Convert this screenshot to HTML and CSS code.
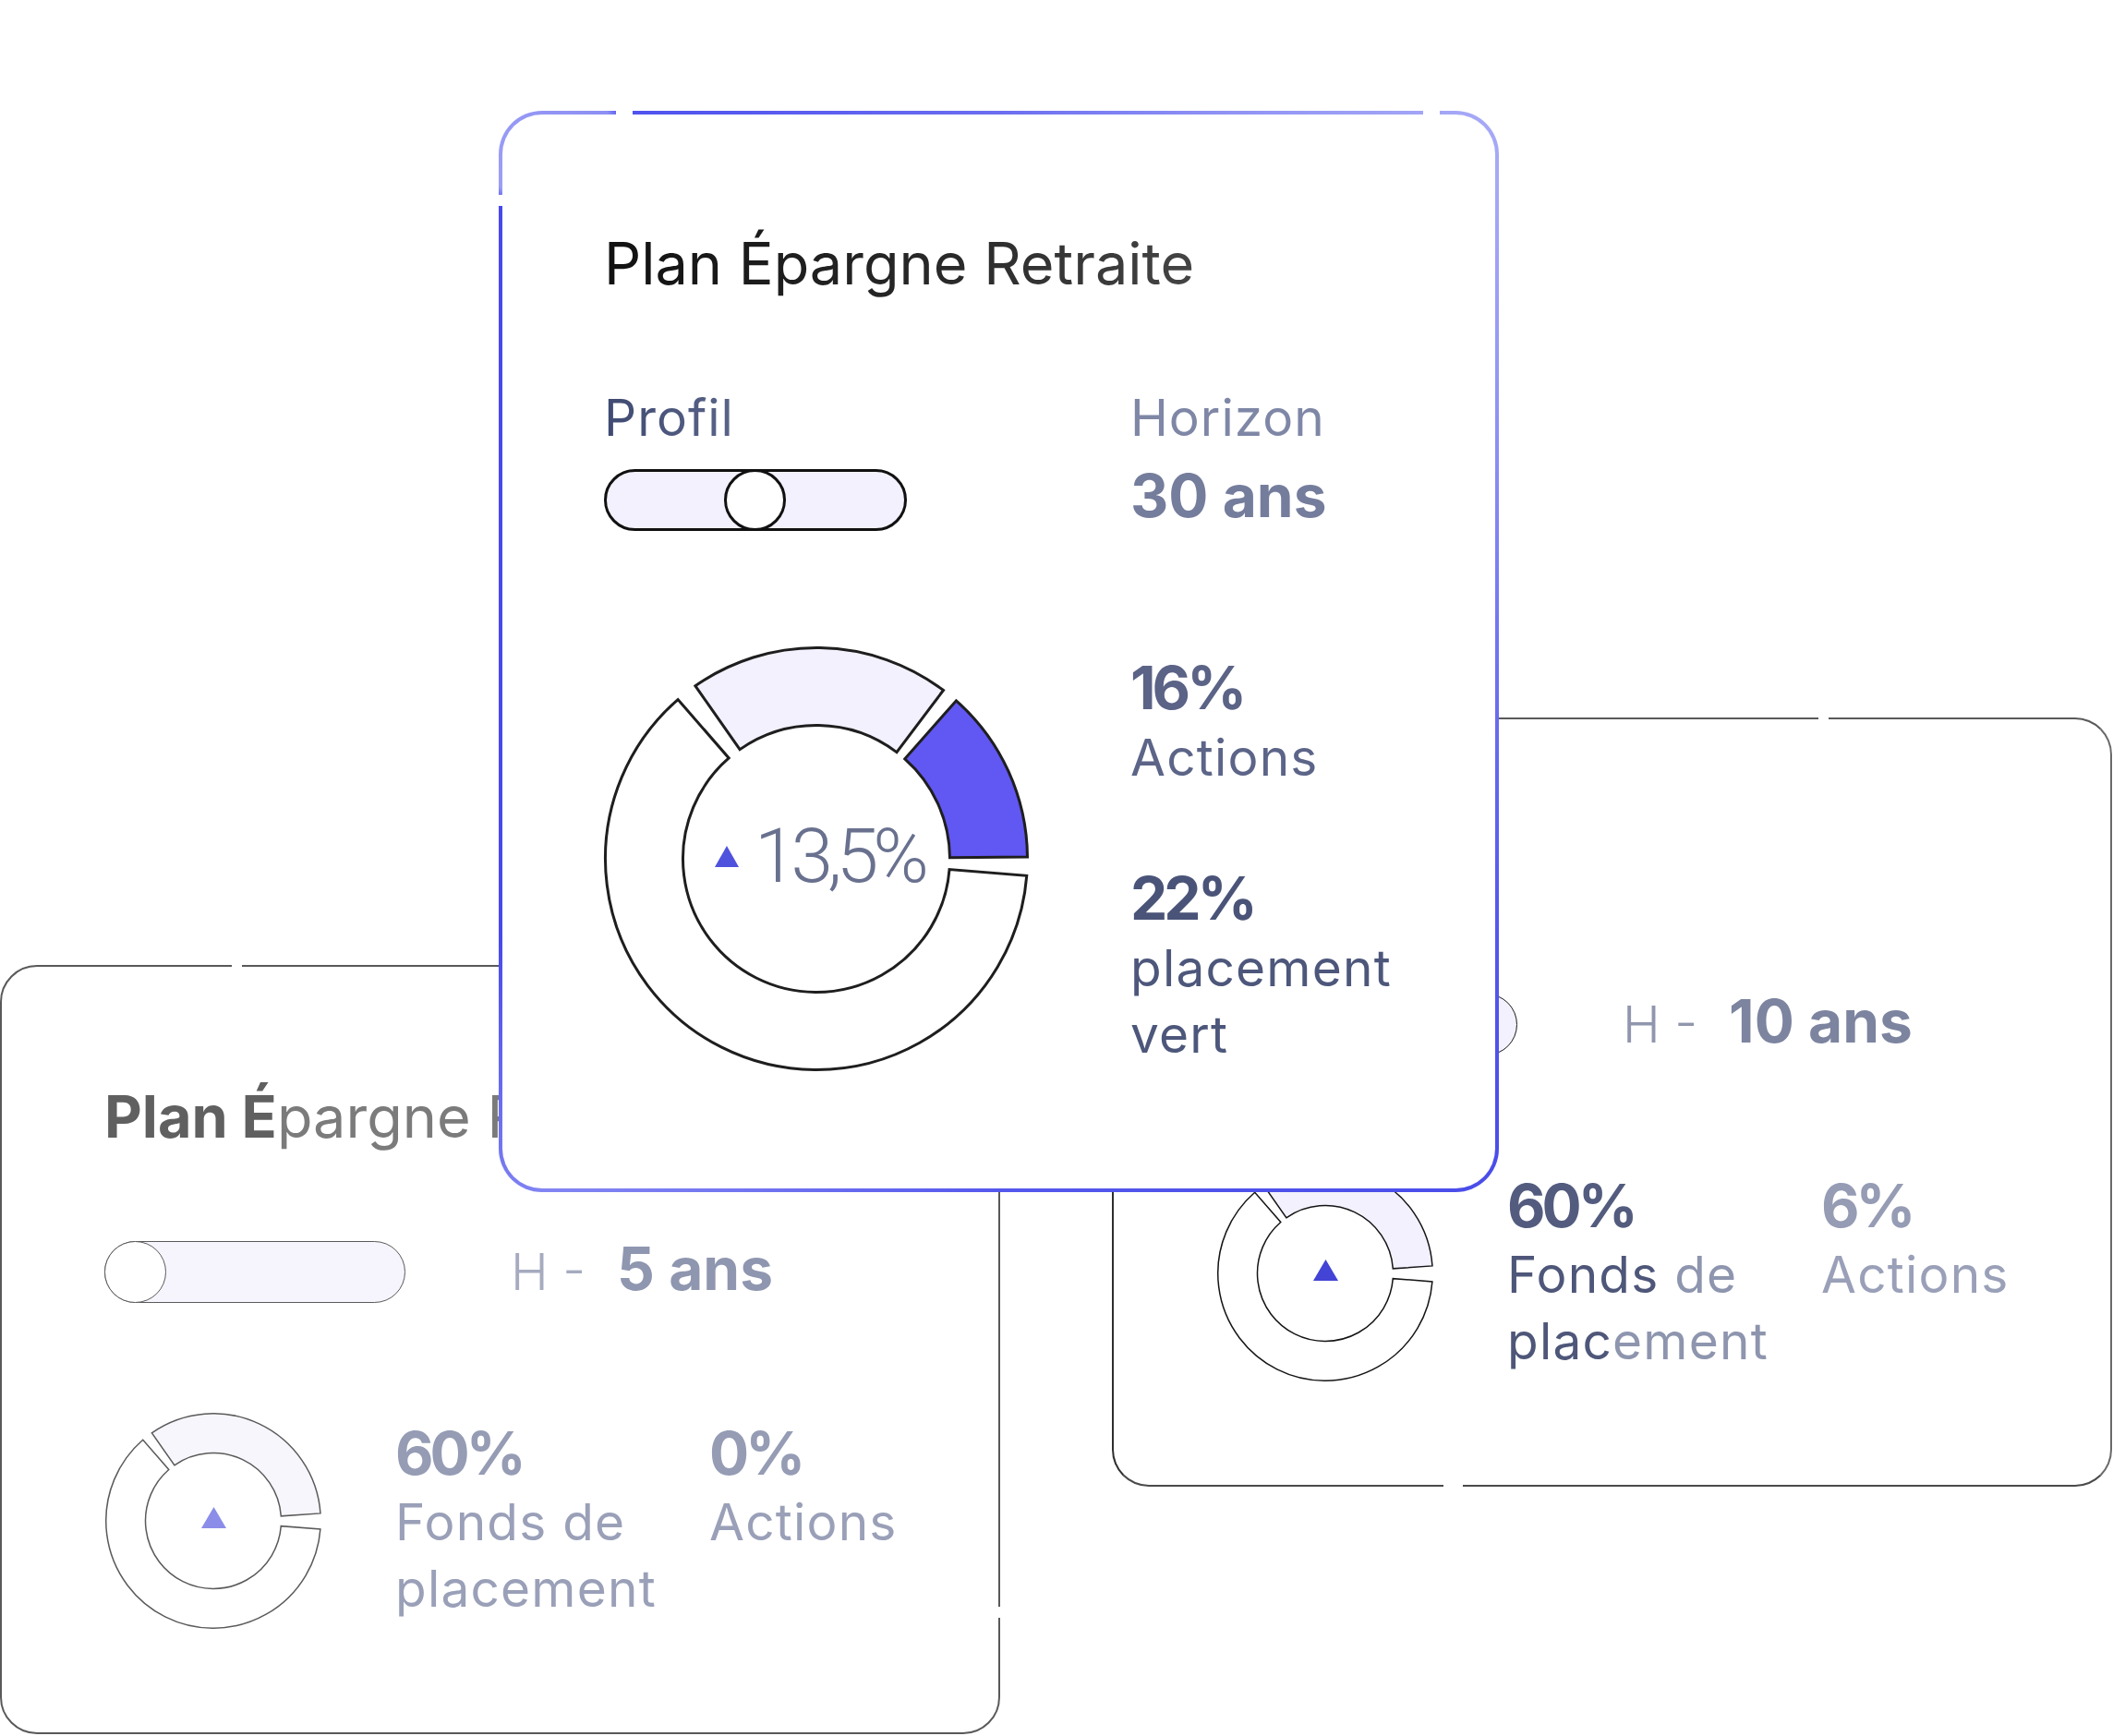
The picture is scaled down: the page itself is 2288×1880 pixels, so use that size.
FILE: index.html
```html
<!DOCTYPE html>
<html lang="fr">
<head>
<meta charset="utf-8">
<title>Plan Épargne Retraite</title>
<link rel="stylesheet" href="styles.css">
</head>
<body>
<div class="canvas">

  <section class="card card-back card-left">
    <span class="nick nick-top" style="left:249px"></span>
    <span class="nick nick-right" style="top:693px"></span>
    <h2 class="title title-back"><b>Plan É</b>pargne Retraite</h2>
    <div class="horizon-row">
      <div class="toggle toggle-back"><span class="knob knob-back"></span></div>
      <p class="h-label"><span class="h-pre">H -</span><span class="h-val">5 ans</span></p>
    </div>
    <div class="chart-row">
      <div class="donut donut-sm">
        <svg width="238" height="238" viewBox="0 0 238 238" class="ring ring-grey">
          <path class="seg-lav-soft" d="M234.97,110.89 A116.25,116.25 0 0 0 52.32,23.77 L76.84,58.79 A73.5,73.5 0 0 1 192.32,113.87 Z"/>
          <path class="seg-white" d="M42.73,31.26 A116.25,116.25 0 1 0 234.91,127.92 L192.28,124.64 A73.5,73.5 0 1 1 70.78,63.53 Z"/>
        </svg>
        <svg class="tri" width="27" height="23" viewBox="0 0 27 23"><polygon points="13.5,0 27,23 0,23" class="tri-soft"/></svg>
      </div>
      <div class="stats stats-back">
        <div class="stat"><div class="pct">60%</div><div class="lbl">Fonds de placement</div></div>
        <div class="stat"><div class="pct">0%</div><div class="lbl">Actions</div></div>
      </div>
    </div>
  </section>

  <section class="card card-back card-right">
    <span class="nick nick-top" style="left:763px"></span>
    <span class="nick nick-bottom" style="left:357px;width:21px"></span>
    <div class="title-space"></div>
    <div class="horizon-row">
      <div class="toggle toggle-back toggle-dark"><span class="knob knob-back knob-dark"></span></div>
      <p class="h-label h-label-right"><span class="h-pre">H -</span><span class="h-val">10 ans</span></p>
    </div>
    <div class="chart-row">
      <div class="donut donut-sm">
        <svg width="238" height="238" viewBox="0 0 238 238" class="ring ring-dark">
          <path class="seg-lav" d="M234.97,110.89 A116.25,116.25 0 0 0 52.32,23.77 L76.84,58.79 A73.5,73.5 0 0 1 192.32,113.87 Z"/>
          <path class="seg-white" d="M42.73,31.26 A116.25,116.25 0 1 0 234.91,127.92 L192.28,124.64 A73.5,73.5 0 1 1 70.78,63.53 Z"/>
        </svg>
        <svg class="tri" width="27" height="23" viewBox="0 0 27 23"><polygon points="13.5,0 27,23 0,23" class="tri-strong"/></svg>
      </div>
      <div class="stats stats-back">
        <div class="stat stat-dark"><div class="pct">60%</div><div class="lbl">Fonds <span class="dim">de</span> plac<span class="dim">ement</span></div></div>
        <div class="stat"><div class="pct">6%</div><div class="lbl">Actions</div></div>
      </div>
    </div>
  </section>

  <section class="card card-main">
    <span class="nick nick-top3" style="left:123px"></span>
    <span class="nick nick-top3" style="left:997px"></span>
    <span class="nick nick-left3" style="top:87px"></span>
    <div class="main-grid">
      <h1 class="title title-main">Plan Épargne Retraite</h1>

      <div class="col profil-col">
        <div class="label label-profil">Profil</div>
        <div class="toggle toggle-main"><span class="knob knob-main"></span></div>
      </div>
      <div class="col horizon-col">
        <div class="label label-horizon">Horizon</div>
        <div class="big-val">30 ans</div>
      </div>

      <div class="donut donut-main">
        <svg width="466" height="466" viewBox="0 0 466 466" class="ring ring-main">
          <path class="seg-blue" d="M461.49,231.01 A228.5,228.5 0 0 0 384.41,61.86 L328.75,124.78 A144.5,144.5 0 0 1 377.49,231.74 Z"/>
          <path class="seg-lav" d="M370.52,50.51 A228.5,228.5 0 0 0 101.94,45.82 L150.12,114.63 A144.5,144.5 0 0 1 319.96,117.6 Z"/>
          <path class="seg-white" d="M83.09,60.55 A228.5,228.5 0 1 0 460.76,251.33 L377.03,244.59 A144.5,144.5 0 1 1 138.2,123.94 Z"/>
        </svg>
        <div class="center-val">
          <svg width="26" height="23" viewBox="0 0 26 23"><polygon points="13,0 26,23 0,23" class="tri-main"/></svg>
          <span class="center-num">13,5%</span>
        </div>
      </div>
      <div class="stats-main">
        <div class="stat stat-a"><div class="pct">16%</div><div class="lbl">Actions</div></div>
        <div class="stat stat-b"><div class="pct">22%</div><div class="lbl">placement vert</div></div>
      </div>
    </div>
  </section>

</div>
</body>
</html>
```
FILE: styles.css
```css
html, body {
  margin: 0;
  padding: 0;
  background: #ffffff;
}

body {
  font-family: Inter, "Noto Sans", "Liberation Sans", sans-serif;
}

.canvas {
  position: relative;
  width: 2288px;
  height: 1880px;
  overflow: hidden;
  background: #ffffff;
}

/* ---------- cards ---------- */
.card {
  position: absolute;
  box-sizing: border-box;
  background: #ffffff;
}

.card-back {
  width: 1083px;
  height: 833px;
  border: 2px solid #595959;
  border-radius: 40px;
  padding: 124px 111px 0 111px;
}

.card-left {
  left: 0;
  top: 1045px;
  z-index: 1;
}

.card-right {
  left: 1204px;
  top: 777px;
  z-index: 1;
  border-color: #595959 #6a6a6a #4a4a4a #2e2e2e;
}

.card-main {
  left: 540px;
  top: 120px;
  width: 1083px;
  height: 1171px;
  z-index: 2;
  border: 4px solid transparent;
  border-radius: 47px;
  padding: 123px 111px 0 110px;
  background:
    linear-gradient(#ffffff, #ffffff) padding-box,
    conic-gradient(from 0deg at 50% 50%,
      #6b6ef0 0deg,
      #8e91f4 22deg,
      #a4a7f6 40deg,
      #a6a9f6 46deg,
      #7073f0 90deg,
      #5457ed 120deg,
      #4a4de9 137deg,
      #5558ec 180deg,
      #8285f2 220deg,
      #6a6def 228deg,
      #474aea 240deg,
      #474aea 312deg,
      #9c9ff5 313deg,
      #8c8ff3 324deg,
      #4f52ee 325deg,
      #6b6ef0 360deg) border-box;
}

/* small white breaks in the outlines */
.nick {
  position: absolute;
  background: #ffffff;
  display: block;
}
.nick-top { top: -3px; width: 11px; height: 4px; }
.nick-bottom { bottom: -3px; width: 11px; height: 4px; }
.nick-right { right: -3px; width: 4px; height: 12px; }
.nick-top3 { top: -5px; width: 18px; height: 6px; }
.nick-left3 { left: -5px; width: 6px; height: 12px; }

/* ---------- titles ---------- */
.title {
  margin: 0;
  font-size: 63px;
  line-height: 76px;
  font-weight: 400;
  white-space: nowrap;
}

.title-space {
  height: 76px;
}

.title-main {
  grid-column: 1 / span 2;
  background: linear-gradient(90deg, #111111 0%, #2a2a2a 45%, #5a5a5a 100%);
  -webkit-background-clip: text;
  background-clip: text;
  color: transparent;
}

.title-back {
  color: #7b7b7b;
}
.title-back b {
  font-weight: 700;
  color: #606060;
}

/* ---------- toggles ---------- */
.toggle {
  box-sizing: border-box;
  height: 67px;
  border-radius: 34px;
  display: flex;
  align-items: center;
  flex: none;
}

.knob {
  box-sizing: border-box;
  width: 67px;
  height: 67px;
  border-radius: 50%;
  background: #ffffff;
  flex: none;
}

.toggle-main {
  width: 328px;
  margin-top: 23px;
  border: 3.5px solid #111111;
  background: #f2f1fd;
  justify-content: center;
}
.knob-main {
  border: 3px solid #111111;
  margin-left: -2px;
}

.toggle-back {
  width: 326px;
  border: 1.5px solid #5a5a5a;
  background: #f6f5fd;
  justify-content: flex-start;
}
.knob-back {
  border: 1.5px solid #5a5a5a;
  margin-left: -1.5px;
}
.toggle-dark {
  border-color: #1a1a1a;
  background: #f2f1fd;
}
.knob-dark {
  border-color: #1a1a1a;
}

/* ---------- back card rows ---------- */
.horizon-row {
  display: flex;
  align-items: center;
  height: 77px;
  margin-top: 92px;
}

.h-label {
  margin: 0 0 9px 114px;
  display: flex;
  align-items: baseline;
  white-space: nowrap;
}
.h-pre {
  font-size: 55px;
  line-height: 66px;
  font-weight: 300;
  color: #a6abbf;
}
.h-val {
  font-size: 64px;
  line-height: 77px;
  font-weight: 700;
  color: #8f96af;
  margin-left: 34px;
}
.h-label-right .h-pre { color: #9096ad; }
.h-label-right .h-val { color: #7c849f; }

.chart-row {
  display: flex;
  align-items: flex-start;
  margin-top: 112px;
}

.donut {
  display: grid;
  place-items: center;
  flex: none;
}
.donut > * {
  grid-area: 1 / 1;
}

.donut-sm {
  width: 238px;
  height: 238px;
  margin-left: -1px;
}

.ring path { stroke-linejoin: miter; }
.ring-grey path { stroke: #5a5a5a; stroke-width: 1.5; }
.ring-dark path { stroke: #151515; stroke-width: 1.5; }
.ring-main path { stroke: #1e1e1e; stroke-width: 3; }

.seg-white { fill: #ffffff; }
.seg-lav { fill: #f2f1fd; }
.seg-lav-soft { fill: #f7f6fd; }
.seg-blue { fill: #6157f2; }

.tri { margin-bottom: 8px; }
.tri-soft { fill: #8b8de9; }
.tri-strong { fill: #4343d6; }
.tri-main { fill: #4f52dc; }

.stats {
  display: grid;
  grid-template-columns: 340px auto;
  margin-left: 78px;
  margin-top: 7px;
}

.pct {
  font-size: 64px;
  line-height: 77px;
  font-weight: 700;
  letter-spacing: -4px;
  white-space: nowrap;
}
.lbl {
  font-size: 55px;
  line-height: 72px;
  font-weight: 400;
  letter-spacing: 1.2px;
}

.stats-back .stat { color: #959cb4; }
.stats-back .stat .lbl { color: #9aa0b8; }
.stats-back .stat-dark { color: #535c7e; }
.stats-back .stat-dark .lbl { color: #4e5779; }
.stats-back .stat-dark .lbl .dim { color: #8e95ae; }

/* ---------- main card ---------- */
.main-grid {
  display: grid;
  grid-template-columns: 570px 283px;
  align-items: start;
}

.col {
  display: flex;
  flex-direction: column;
  align-items: flex-start;
  margin-top: 96px;
}

.label {
  font-size: 55px;
  line-height: 66px;
  font-weight: 400;
  letter-spacing: 1px;
}
.label-profil {
  background: linear-gradient(90deg, #3f4a72, #5a6488);
  -webkit-background-clip: text;
  background-clip: text;
  color: transparent;
}
.label-horizon { color: #7f87a6; }

.big-val {
  font-size: 64px;
  line-height: 77px;
  font-weight: 700;
  color: #757d9c;
  margin-top: 13px;
}

.donut-main {
  width: 466px;
  height: 466px;
  margin-top: 122px;
  margin-left: -3px;
}

.center-val {
  display: flex;
  align-items: center;
  gap: 17px;
  margin-bottom: 6px;
  color: #69718f;
  font-family: Roboto, "Liberation Sans", sans-serif;
  font-size: 82px;
  line-height: 82px;
  font-weight: 300;
}
.center-num {
  letter-spacing: -6px;
  margin-right: -6px;
}

.stats-main {
  margin-top: 131px;
}
.stats-main .pct { line-height: 78px; }
.stats-main .stat-b { margin-top: 78px; }
.stat-a .pct { color: #5b6386; }
.stat-a .lbl { color: #5c6588; }
.stat-b .pct { color: #4a5478; }
.stat-b .lbl { color: #4d577b; }
```
